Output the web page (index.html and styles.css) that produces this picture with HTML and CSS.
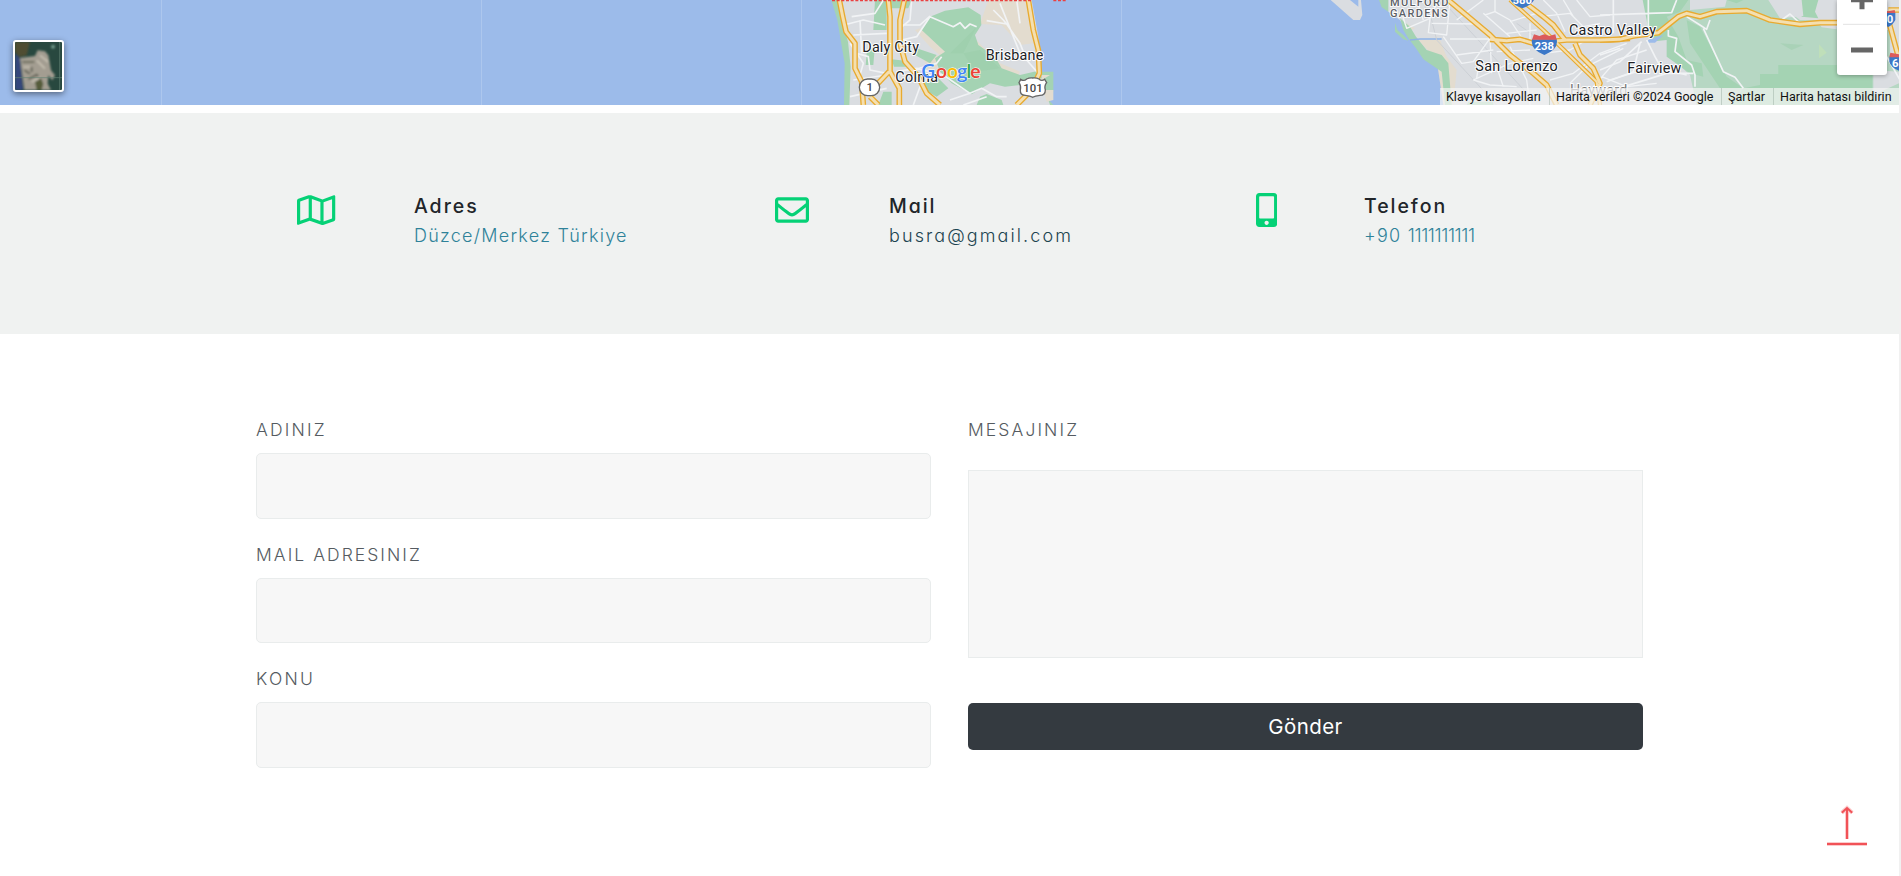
FILE: index.html
```html
<!DOCTYPE html>
<html lang="tr">
<head>
<meta charset="utf-8">
<title>İletişim</title>
<link rel="stylesheet" href="styles.css">
</head>
<body>
<main class="page">
  <section class="map">
    <svg class="map-canvas" width="1899" height="105" viewBox="0 0 1899 105">
      <rect class="water" width="1899" height="105"/>
      <path class="tile-line" d="M161.500 0V105M481.500 0V105M801.500 0V105M1121.500 0V105"/>
      <!-- Daly City and Brisbane -->
      <g transform="translate(820) scale(.33333)">
        <path class="green" d="M34 0L52 60 62 120 74 190 72 315H130V0ZM560 215H700V275H665L700 315H500Z"/>
        <path class="land" d="M58 0L72 80 84 125 92 200 88 315H690L680 285 640 250 660 220 655 110 635 0Z"/>
        <path class="sand" d="M505 0H630L640 130 600 135 545 75 480 72ZM300 85L395 160 410 210 330 140 285 90ZM300 158L360 168 365 190 330 215ZM468 120L540 190 600 215 590 235 520 205 470 140ZM650 225L690 225 650 250ZM670 270H700V300L680 305Z"/>
        <path class="green" d="M165 0H200V90H160ZM205 0H275L265 25H205ZM330 50L375 32 445 22 482 45 484 75 465 105 475 135 525 170 545 205 600 225 665 210V235L600 255 555 260 510 250 455 283 395 250 360 215 345 175 375 155 305 90ZM140 160L165 135 160 195H137ZM215 178L255 182 275 200H222ZM290 145L350 165 330 190 285 165ZM305 250L355 235 385 265 350 290 315 270ZM190 275H215V315H175ZM480 290L500 282 545 300 550 315H470Z"/>
        <path class="green-dark" d="M390 160L470 80 430 160ZM430 160L480 150 540 205 465 215Z"/>
        <path class="street" d="M72 75L130 60 195 75M100 105L200 100M95 50L165 40 190 0M110 160L145 170 150 210 200 220M120 60L125 160M90 130L130 190 120 225M240 85L270 60 275 0M245 120L290 110 330 50 400 80 420 68 435 85 450 72 470 80M240 75L300 75 330 48M280 210L350 190 365 170M230 215L290 205 370 225 450 280 485 265 530 290 560 290M300 260L280 315M390 300L450 280M430 315L500 290M100 240L200 225M90 290L200 265M500 62L560 72 600 130 620 180 655 220M520 30L550 60 560 72M540 10L600 160M590 0L600 70"/>
        <path class="road-edge" d="M58 0L68 50 78 95 105 130V205L125 245 130 315M205 0L210 50V215L238 265V315M207 215L160 265 128 270M253 0L240 60 240 130 255 185 295 230 320 280 360 315M150 290L175 315M625 0L640 90 655 150 658 220 635 270 590 315"/>
        <path class="road-fill" d="M58 0L68 50 78 95 105 130V205L125 245 130 315M205 0L210 50V215L238 265V315M207 215L160 265 128 270M253 0L240 60 240 130 255 185 295 230 320 280 360 315M150 290L175 315M625 0L640 90 655 150 658 220 635 270 590 315"/>
        <path class="border-line" d="M36 1H633M700 1H740"/>
        <text class="place" x="127" y="156" textLength="170">Daly City</text>
        <text class="place" x="497" y="179" textLength="173">Brisbane</text>
        <text class="place" x="226" y="247" textLength="128">Colma</text>
        <g class="wordmark" font-size="56">
          <text fill="#4285f4" x="303" y="234" font-size="60" textLength="44" lengthAdjust="spacingAndGlyphs">G</text>
          <text fill="#ea4335" x="347" y="234">o</text>
          <text fill="#fbbc04" x="380" y="234">o</text>
          <text fill="#4285f4" x="411" y="234">g</text>
          <text fill="#34a853" x="439" y="234">l</text>
          <text fill="#ea4335" x="450" y="234">e</text>
        </g>
        <rect class="shield" x="118" y="237" width="61" height="50" rx="25"/>
        <text class="shield-text" x="149" y="273">1</text>
        <path class="shield" d="M602 238Q612 245 620 237Q628 233 638 234Q649 233 657 237Q665 245 674 238L680 248Q672 258 676 270Q676 286 660 286Q645 287 638 292Q631 287 616 286Q600 286 601 270Q604 258 597 248Z"/>
        <text class="shield-text" x="639" y="276">101</text>
      </g>
      <!-- Hayward and the eastern hills -->
      <g transform="translate(1310) scale(.33333)">
        <path class="land" d="M62 0L85 20 130 60 150 60 157 45 153 0 145 0V20L120 0ZM210 0L235 35 270 60 300 110 340 165 400 200 420 315H1767V0Z"/>
        <path class="sand" d="M325 120H390L410 170 440 210 430 315H400L380 180ZM290 70L315 85 300 92Z"/>
        <path class="green" d="M207 0H235V35L215 22ZM270 55L300 80 318 110 350 150 395 165 415 190 425 315H405L395 215 340 178 318 145 295 115 280 90ZM255 68L262 90 280 105 295 122 280 118 255 95ZM475 305H550V315H470Z"/>
        <path class="creek" d="M300 120L330 117H395"/>
        <path class="rail" d="M345 20L365 60 380 120 560 315M395 0L660 290M620 70L690 120"/>
        <path class="street thin" d="M275 40L290 85 360 55 385 0M360 55L355 98 410 105 420 0M320 0L340 60M365 70L500 72M400 110L455 190 490 185 540 115 545 220M420 117H540M440 165L550 150M490 240L545 215 600 190 670 175M490 240L540 255 620 260M505 200L500 235M560 200L580 260M600 140L650 240 660 315M440 60L520 0M520 40L600 110M525 45L555 35 600 60 640 120M555 35V0M600 65L680 40 660 0M660 70V120M560 155L660 150M590 100L680 90M690 50L780 40 820 80 870 70M700 0L740 40 765 95M760 0L790 50M800 0L840 50 900 45M700 160L780 150 860 100M720 240L790 220 870 160 950 130M780 250L830 200 940 145M850 260L920 180 1010 150M875 230L950 260 1040 250M900 240L1030 200 1130 225"/>
        <path class="road-edge" d="M415 0L540 105 600 165 670 220 710 255 740 315M540 118L590 122 630 118 670 130 770 120 900 120 960 115M635 0L700 50 730 75 765 120M795 130L810 165 850 205 870 250 840 315"/>
        <path class="road-edge narrow" d="M600 0L700 90 860 245 870 315"/>
        <path class="road-fill" d="M415 0L540 105 600 165 670 220 710 255 740 315M540 118L590 122 630 118 670 130 770 120 900 120 960 115M635 0L700 50 730 75 765 120M795 130L810 165 850 205 870 250 840 315"/>
        <path class="road-fill narrow" d="M600 0L700 90 860 245 870 315"/>
      </g>
      <g transform="translate(1600) scale(.33333)">
        <path class="green-light" d="M190 0H530L560 30 600 60 680 60 720 90 870 90V170L897 205V315H290L270 225 220 180 200 100 170 105Z"/>
        <path class="green" d="M128 0H265L240 35 200 50 235 110 260 180 305 190 310 230 270 220 200 170 200 120 150 125 140 60ZM260 60L300 80 380 230 430 265H360L270 130ZM600 0H655L645 35 655 55 605 50ZM480 222H535V195H720V225H817V315H390L430 265 480 255ZM380 0H430L410 10Z"/>
        <path class="green-dark" d="M540 130L610 135 575 150Z"/>
        <path fill="#bfdfb9" d="M657 133L680 158 657 175Z"/>
        <path class="land" d="M270 0H380L375 20 270 30ZM505 0H605L610 48 540 55ZM820 210L897 215V250L820 285ZM650 60L710 70V88L665 82Z"/>
        <path class="water" d="M145 120L190 105 165 128 140 128Z"/>
        <path class="street" d="M0 45L145 40 215 38 230 0M145 0V80M40 0V100M205 90L205 108 230 115 225 155 275 195 285 225V260M260 50L300 75 320 88 330 60M310 85L370 215 405 232 430 265M545 60L570 42 600 70M0 210L60 185 125 125M20 245L100 215 120 130M55 265L200 220 280 220M140 120L165 170 190 215M0 165L60 145M860 170L900 240"/>
        <path class="road-edge" d="M0 120L60 118 100 108 175 98 235 50 260 40 300 50 350 35 440 32 510 60 600 73 660 68 720 68M865 30H900M865 60L895 170"/>
        <path class="road-fill" d="M0 120L60 118 100 108 175 98 235 50 260 40 300 50 350 35 440 32 510 60 600 73 660 68 720 68M865 30H900M865 60L895 170"/>
        <path class="interstate" d="M850 38H886V60Q878 75 865 81L850 72ZM868 170H897V212Q872 202 868 185Z"/>
        <path class="interstate-top" d="M850 30L864 34 884 30 886 39H850ZM871 158L897 163V172H868Z"/>
        <text class="interstate-text" x="870" y="70">0</text>
        <text class="interstate-text" x="886" y="201">6</text>
        <text class="place" x="82" y="218" textLength="162">Fairview</text>
      </g>
      <g transform="translate(1310) scale(.33333)">
        <path class="interstate" d="M602 0H672Q665 15 637 25Q609 15 602 0ZM666 118H740Q747 148 703 165Q660 148 666 118Z"/>
        <path class="interstate-top" d="M672 103L688 108 703 103 718 108 736 103 740 119H666Z"/>
        <text class="interstate-text" x="637" y="12">580</text>
        <text class="interstate-text" x="703" y="151">238</text>
        <text class="district" x="240" y="19" textLength="175">MULFORD</text>
        <text class="district" x="240" y="52" textLength="173">GARDENS</text>
        <text class="place" x="777" y="104" textLength="261">Castro Valley</text>
        <text class="place" x="496" y="214" textLength="247">San Lorenzo</text>
        <text class="place faded" x="780" y="284" textLength="172">Hayward</text>
      </g>
    </svg>
    <button class="satellite" aria-label="Uydu görünümü">
      <svg width="47" height="48" viewBox="0 0 141 144">
        <defs><filter id="soft"><feGaussianBlur stdDeviation="2.500"/></filter></defs>
        <rect width="141" height="144" fill="#28483f"/>
        <g filter="url(#soft)">
          <path d="M0 0H45L35 40 12 45 0 30Z" fill="#504e30"/>
          <path d="M0 35L15 50 25 144H0Z" fill="#34477b"/>
          <path d="M15 48L60 42 68 25 90 28 100 40 108 85 120 100 112 115 100 100 98 125 108 144H28Z" fill="#a39d91"/>
          <path d="M22 60H58M28 85L45 95M50 75V90M40 112L65 98 80 118" fill="none" stroke="#5f6052" stroke-width="5"/>
          <path d="M65 55L90 80M75 40L100 60M50 120L75 105M25 75H45" fill="none" stroke="#c7c1b3" stroke-width="5"/>
          <path d="M60 120L78 110 85 125 80 144H65Z" fill="#555c3b"/>
          <circle cx="114" cy="14" r="6" fill="#739b8c"/>
        </g>
        <path d="M0 107H141M134 0V144" stroke="#648273" stroke-width="2"/>
      </svg>
    </button>
    <div class="zoom-control">
      <svg width="50" height="75" viewBox="0 0 150 225">
        <path d="M75 -30V28M42 -1H108M42 150H108" fill="none" stroke="#666" stroke-width="15"/>
        <path d="M18 73H129" stroke="#e2e2e2" stroke-width="3"/>
      </svg>
    </div>
    <div class="attribution">
      <span class="credit keys">Klavye kısayolları</span>
      <span class="credit data">Harita verileri ©2024 Google</span>
      <span class="credit terms">Şartlar</span>
      <span class="credit report">Harita hatası bildirin</span>
    </div>
  </section>

  <section class="contact">
    <div class="contact-item">
      <div class="contact-icon"><svg width="38.250" height="34" viewBox="0 0 576 512"><path d="M560.020 32c-1.960 0-3.980.370-5.960 1.160L384.010 96H384L212 35.280A64.252 64.252 0 0 0 191.760 32c-6.690 0-13.370 1.050-19.810 3.140L20.120 87.950A32.006 32.006 0 0 0 0 117.660v346.320C0 473.170 7.530 480 15.990 480c1.960 0 3.970-.370 5.960-1.160L192 416l172 60.710a63.980 63.980 0 0 0 40.050.150l151.830-52.810A31.996 31.996 0 0 0 576 394.340V48.020c0-9.190-7.530-16.020-15.980-16.020zM224 90.420l128 45.190v285.970l-128-45.190V90.420zM48 418.050V129.070l128-44.530v286.200l-.640.230L48 418.050zm480-35.130l-128 44.530V141.260l.640-.240L528 93.950v288.970z"/></svg></div>
      <div>
        <h3 class="contact-title">Adres</h3>
        <p class="contact-value">Düzce/Merkez Türkiye</p>
      </div>
    </div>
    <div class="contact-item">
      <div class="contact-icon"><svg width="34" height="34" viewBox="0 0 512 512"><path d="M464 64H48C21.490 64 0 85.490 0 112v288c0 26.510 21.490 48 48 48h416c26.510 0 48-21.490 48-48V112c0-26.510-21.490-48-48-48zm0 48v40.805c-22.422 18.259-58.168 46.651-134.587 106.490-16.841 13.247-50.201 45.072-73.413 44.701-23.208.375-56.579-31.459-73.413-44.701C106.180 199.465 70.425 171.067 48 152.805V112h416zM48 400V214.398c22.914 18.251 55.409 43.862 104.938 82.646 21.857 17.205 60.134 55.186 103.062 54.955 42.717.231 80.509-37.199 103.053-54.947 49.528-38.783 82.032-64.401 104.947-82.653V400H48z"/></svg></div>
      <div>
        <h3 class="contact-title">Mail</h3>
        <p class="contact-value v-mail">busra@gmail.com</p>
      </div>
    </div>
    <div class="contact-item">
      <div class="contact-icon"><svg width="21.250" height="34" viewBox="0 0 320 512"><path d="M272 0H48C21.500 0 0 21.500 0 48v416c0 26.500 21.500 48 48 48h224c26.500 0 48-21.500 48-48V48c0-26.500-21.500-48-48-48zM160 480c-17.700 0-32-14.300-32-32s14.300-32 32-32 32 14.300 32 32-14.300 32-32 32zm112-108c0 6.600-5.400 12-12 12H60c-6.600 0-12-5.400-12-12V60c0-6.600 5.400-12 12-12h200c6.600 0 12 5.400 12 12v312z"/></svg></div>
      <div>
        <h3 class="contact-title">Telefon</h3>
        <p class="contact-value">+90 <span class="digits">1111111111</span></p>
      </div>
    </div>
  </section>

  <form class="form">
    <div class="fields">
      <label class="label" for="name">ADINIZ</label>
      <input class="input" id="name" type="text">
      <label class="label l-mail" for="mail">MAIL ADRESINIZ</label>
      <input class="input" id="mail" type="text">
      <label class="label" for="subject">KONU</label>
      <input class="input" id="subject" type="text">
    </div>
    <div class="fields">
      <label class="label l-message" for="message">MESAJINIZ</label>
      <textarea class="textarea" id="message"></textarea>
      <button class="submit" type="button">Gönder</button>
    </div>
  </form>

  <a class="to-top" href="#" aria-label="Yukarı">
    <svg width="42" height="42" viewBox="0 0 42 42">
      <path class="top-halo" d="M21 35V4M15.800 8.800L21 4 26.200 8.800M1 40H41"/>
      <path class="top-line" d="M21 35V4M15.800 8.800L21 4 26.200 8.800M1 40H41"/>
    </svg>
  </a>
</main>
</body>
</html>
```
FILE: styles.css
```css
* { box-sizing: border-box; }
body {
  margin: 0;
  background: #f1f1f1;
  font-family: Inter, "Open Sans", sans-serif;
  font-feature-settings: "cv11" 1;
  overflow: hidden;
}
.page {
  width: 1899px;
  height: 876px;
  background: #fff;
}
.map {
  position: relative;
  height: 113px;
}
.map-canvas { display: block; font-family: Roboto, sans-serif; }
.water { fill: #9cbbea; }
.land { fill: #dadde1; }
.sand { fill: #e3dccf; }
.green { fill: #a4d3b3; }
.green-light { fill: #b6d7c3; }
.green-dark { fill: #98cca9; opacity: .45; }
.tile-line { stroke: #adc7ee; fill: none; }
.creek { stroke: #8fb3e6; stroke-width: 4; fill: none; }
.rail { stroke: #ccd0d5; stroke-width: 3; fill: none; }
.street { stroke: #f1f3f5; stroke-width: 5; fill: none; stroke-linejoin: round; }
.street.thin { stroke-width: 4; }
.road-edge { stroke: #e8aa2f; stroke-width: 17; fill: none; stroke-linejoin: round; }
.road-fill { stroke: #f4dfb0; stroke-width: 9; fill: none; stroke-linejoin: round; }
.road-edge.narrow { stroke-width: 13; }
.road-fill.narrow { stroke-width: 6; }
.border-line { stroke: #ea4040; stroke-width: 5; stroke-dasharray: 9 5; fill: none; }
.place {
  font-size: 43px;
  fill: #202124;
  stroke: #fff;
  stroke-width: 6px;
  stroke-linejoin: round;
  paint-order: stroke;
}
.faded { fill: #777; }
.district {
  font-size: 33px;
  font-weight: 500;
  fill: #5b6066;
  stroke: #fff;
  stroke-width: 5px;
  paint-order: stroke;
}
.wordmark {
  font-family: "Open Sans", sans-serif;
  font-weight: 600;
  stroke: #fff;
  stroke-width: 3px;
  paint-order: stroke;
}
.shield { fill: #fff; stroke: #666; stroke-width: 4; }
.shield-text { font-size: 34px; font-weight: 500; fill: #444; text-anchor: middle; }
.interstate { fill: #3c78c8; }
.interstate-top { fill: #dc5b5b; }
.interstate-text { font-size: 34px; font-weight: 700; fill: #fff; text-anchor: middle; }
.satellite {
  position: absolute;
  left: 13px;
  top: 40px;
  width: 51px;
  height: 52px;
  padding: 0;
  border: 2px solid #fff;
  border-radius: 3px;
  overflow: hidden;
  background: #fff;
  box-shadow: 0 2px 6px rgba(0, 0, 0, .45);
}
.satellite svg { display: block; }
.zoom-control {
  position: absolute;
  left: 1837px;
  top: 0;
  width: 50px;
  height: 75px;
  background: #fff;
  border-radius: 0 0 3px 3px;
  box-shadow: 0 1px 4px rgba(0, 0, 0, .3);
}
.zoom-control svg { display: block; }
.attribution {
  position: absolute;
  right: 0;
  top: 88px;
  width: 459px;
  height: 17px;
  display: flex;
  background: rgba(245, 245, 245, .7);
  font: 12.5px/17px Roboto, sans-serif;
  color: #111;
  white-space: nowrap;
}
.credit { padding-left: 6px; }
.credit + .credit { padding-left: 6px; border-left: 1px solid rgba(150, 170, 160, .45); }
.keys { width: 109px; }
.data { width: 172px; }
.terms { width: 52px; }
.report { width: 126px; }

.contact {
  height: 220.5px;
  padding: 80px 0 0 238px;
  display: grid;
  grid-template-columns: repeat(3, 475px);
  background: #f0f2f1;
}
.contact-item {
  display: grid;
  grid-template-columns: 157px auto;
  gap: 19px;
  align-items: start;
  justify-content: start;
}
.contact-icon { display: flex; justify-content: center; }
.contact-icon svg { fill: #05d176; }
.contact-title {
  margin: 0;
  font-size: 19.500px;
  font-weight: 500;
  line-height: 26px;
  letter-spacing: 1.950px;
  color: #212529;
  white-space: nowrap;
}
.contact-value {
  margin: 3px 0 0;
  font-size: 18px;
  font-weight: 300;
  line-height: 28px;
  letter-spacing: 1.250px;
  color: #2f8299;
  white-space: nowrap;
}
.v-mail { color: #1c4450; letter-spacing: 2.100px; }
.digits { letter-spacing: -.400px; }

.form {
  padding: 82.5px 0 0 256px;
  display: grid;
  grid-template-columns: 675px 675px;
  column-gap: 37px;
}
.fields { display: flex; flex-direction: column; }
.label {
  height: 28px;
  line-height: 28px;
  margin-bottom: 9px;
  font-size: 17.500px;
  font-weight: 300;
  letter-spacing: 2.200px;
  color: #555b61;
  white-space: nowrap;
}
.l-mail { letter-spacing: 2.050px; }
.l-message { letter-spacing: 2.100px; }
.input, .textarea {
  width: 675px;
  border: 1px solid #e9ecec;
  background: #f7f7f7;
  outline: 0;
}
.input {
  height: 65.500px;
  margin: 0 0 22px;
  border-radius: 5px;
}
.textarea {
  height: 188px;
  margin: 17px 0 45px;
  resize: none;
}
.submit {
  height: 47px;
  padding: 1px 0 0;
  border: 0;
  border-radius: 5px;
  background: #343a40;
  color: #fff;
  font: 400 20.500px/46px Inter, sans-serif;
  letter-spacing: .4px;
}
.to-top {
  position: absolute;
  left: 1826px;
  top: 804px;
  width: 42px;
  height: 42px;
}
.to-top svg { display: block; }
.top-line, .top-halo { fill: none; stroke: #f15257; stroke-width: 2; }
.top-halo { stroke-width: 4; opacity: .3; }
```
